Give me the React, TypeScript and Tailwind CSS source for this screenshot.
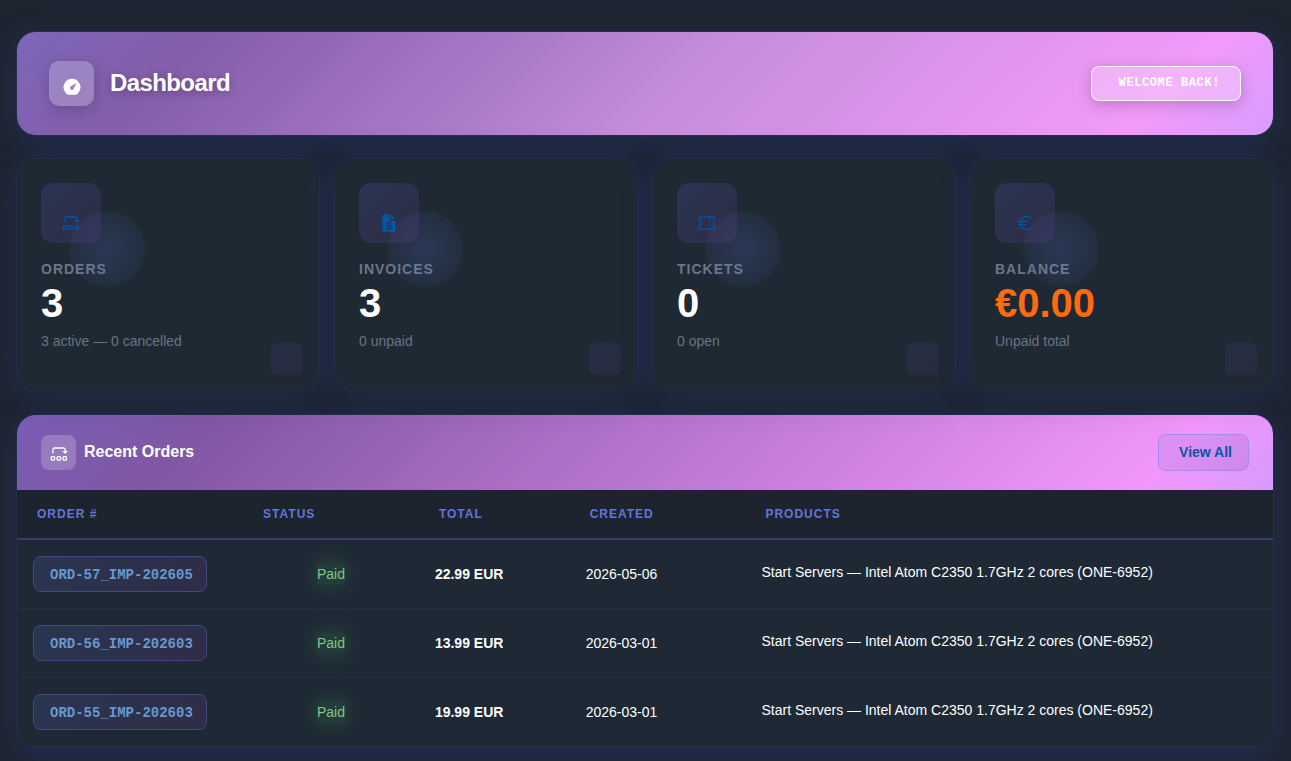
import React from 'react';
import { Euro } from 'lucide-react';

interface Stat {
  label: string;
  value: string;
  note: string;
  icon: React.ReactNode;
  highlight?: boolean;
}

interface Order {
  id: string;
  status: string;
  total: string;
  created: string;
  product: string;
}

const GaugeIcon: React.FC = () => (
  <svg viewBox="0 0 20 20" className="h-5 w-5" fill="currentColor" aria-hidden="true">
    <path
      fillRule="evenodd"
      d="M10 1.8a8.4 8.4 0 0 0-6.6 13.6l1.3 1.7c.3.4.7.6 1.2.6h8.2c.5 0 .9-.2 1.2-.6l1.3-1.7A8.4 8.4 0 0 0 10 1.8zM14.4 6.3l-2.5 4.9a2 2 0 1 1-2.6-2.3z"
    />
  </svg>
);

const OrdersIcon: React.FC = () => (
  <svg viewBox="0 0 20 20" className="h-5 w-5" fill="none" stroke="currentColor" strokeWidth="1.3" aria-hidden="true">
    <path d="M3.9 9.6V5.8a1.8 1.8 0 0 1 1.8-1.8h8.7a1.8 1.8 0 0 1 1.8 1.8V7.200" />
    <path d="M13.4 7l2.8 3 2.600-3z" fill="currentColor" stroke="none" />
    <rect x="2.2" y="12.6" width="3.4" height="3.6" rx="0.9" />
    <rect x="8.1" y="12.6" width="3.4" height="3.6" rx="0.9" />
    <rect x="14" y="12.6" width="3.4" height="3.6" rx="0.9" />
  </svg>
);

const InvoiceIcon: React.FC = () => (
  <svg viewBox="0 0 20 20" className="h-5 w-5" fill="currentColor" aria-hidden="true">
    <path d="M5.2 1.4H11V7a.8.8 0 0 0 .8.8h4.9v9.1a1.8 1.8 0 0 1-1.8 1.8H5.2a1.8 1.8 0 0 1-1.8-1.8V3.2a1.8 1.8 0 0 1 1.8-1.8z" />
    <path d="M12.3 1.6l4 4.3h-4z" />
    <path
      d="M12.4 10.4c-.4-.6-1.2-.8-2.4-.8-1.4 0-2.2.5-2.2 1.5 0 2.2 4.5.9 4.5 3.1 0 1-.9 1.5-2.3 1.5-1.2 0-2-.3-2.5-.9M10 8.6v1M10 15.7v1"
      fill="none"
      stroke="#2c3350"
      strokeWidth="1.5"
    />
  </svg>
);

const TicketIcon: React.FC = () => (
  <svg viewBox="0 0 20 20" className="h-5 w-5" fill="none" stroke="currentColor" strokeWidth="1.3" aria-hidden="true">
    <path d="M3.4 3.8h13.2a1 1 0 0 1 1 1v2.4A3 3 0 0 0 16 10a3 3 0 0 0 1.6 2.8v2.4a1 1 0 0 1-1 1H3.4a1 1 0 0 1-1-1v-2.4A3 3 0 0 0 4 10a3 3 0 0 0-1.6-2.8V4.8a1 1 0 0 1 1-1z" />
    <path d="M12.7 3.2v2.6M12.7 7.2v2.2M12.7 10.8v2.2M12.7 14.4v2.4" />
  </svg>
);

const stats: Stat[] = [
  { label: 'Orders', value: '3', note: '3 active — 0 cancelled', icon: <OrdersIcon /> },
  { label: 'Invoices', value: '3', note: '0 unpaid', icon: <InvoiceIcon /> },
  { label: 'Tickets', value: '0', note: '0 open', icon: <TicketIcon /> },
  {
    label: 'Balance',
    value: '€0.00',
    note: 'Unpaid total',
    icon: <Euro className="h-5 w-5" strokeWidth={1.5} />,
    highlight: true
  }
];

const product = 'Start Servers — Intel Atom C2350 1.7GHz 2 cores (ONE-6952)';

const orders: Order[] = [
  { id: 'ORD-57_IMP-202605', status: 'Paid', total: '22.99 EUR', created: '2026-05-06', product },
  { id: 'ORD-56_IMP-202603', status: 'Paid', total: '13.99 EUR', created: '2026-03-01', product },
  { id: 'ORD-55_IMP-202603', status: 'Paid', total: '19.99 EUR', created: '2026-03-01', product }
];

const StatCard: React.FC<{ stat: Stat }> = ({ stat }) => (
  <div className="relative overflow-hidden rounded-[20px] border border-[#222d42] bg-[#1e2934] px-6 pt-6 pb-10 shadow-[0_4px_32px_rgba(40,60,150,0.32)]">
    <div className="flex h-[60px] w-[60px] items-end justify-center rounded-xl bg-linear-135 from-[#2a3552] to-[#2e2c46] pb-[10px] text-[#0056a8]">
      {stat.icon}
    </div>
    <div className="absolute top-[52px] left-[52px] h-[76px] w-[76px] rounded-full bg-radial from-[#667eea]/18 to-[#667eea]/6 to-70%" />
    <h2 className="mt-4 text-[14px] leading-5 font-bold tracking-[1px] text-[#6b7688] uppercase">{stat.label}</h2>
    <p className={`mt-1 text-[40px] leading-10 font-bold ${stat.highlight ? 'text-[#fd6a10]' : 'text-white'}`}>
      {stat.value}
    </p>
    <p className="mt-2 text-[14px] leading-5 text-[#687482]">{stat.note}</p>
    <div className="absolute right-4 bottom-4 h-8 w-8 rounded-md bg-linear-135 from-[#252f46] to-[#292b3f]" />
  </div>
);

const App: React.FC = () => {
  return (
    <main className="flex min-h-screen flex-col bg-[#1e2530] pt-[31px] pr-[17px] pb-[13px] pl-4 font-['Liberation_Sans',Arial,sans-serif] text-white">
      <header className="flex items-center justify-between rounded-[20px] border border-[#2a2f48] bg-[linear-gradient(135deg,#7d66ba_0%,#845eaa_14%,#a979c6_38%,#c48bd8_52%,#ca8fdd_57%,#f29afa_89%,#d69cff_100%)] bg-origin-border px-8 py-[29px] shadow-[0_8px_32px_rgba(40,60,150,0.35)]">
        <div className="flex items-center gap-4">
          <div className="flex h-[45px] w-[45px] items-end justify-center rounded-[10px] bg-white/22 pb-[9px] shadow-[0_4px_15px_rgba(0,0,0,0.2)]">
            <GaugeIcon />
          </div>
          <h1 className="pb-0.5 text-2xl leading-8 font-bold tracking-tight [text-shadow:0_2px_10px_rgba(0,0,0,0.3)]">
            Dashboard
          </h1>
        </div>
        <span className="rounded-lg border border-white bg-white/25 pt-2 pr-5 pb-[9px] pl-[27px] font-['Liberation_Mono',monospace] text-xs font-bold tracking-wider uppercase shadow-[0_4px_15px_rgba(0,0,0,0.2)]">
          Welcome back!
        </span>
      </header>

      <section className="mt-[22px] grid grid-cols-4 gap-[14px]">
        {stats.map((stat) => (
          <StatCard key={stat.label} stat={stat} />
        ))}
      </section>

      <section className="mt-[22px] overflow-hidden rounded-[20px] border border-[#222d46] bg-[#1e2935] shadow-[0_8px_32px_rgba(40,60,150,0.35)]">
        <div className="flex items-center justify-between bg-[linear-gradient(135deg,#785eb5_0%,#8157a4_15%,#f296fb_90%,#d69aff_100%)] px-6 py-[19px]">
          <div className="flex items-center gap-2">
            <div className="flex h-[35px] w-[35px] items-end justify-center rounded-lg bg-white/20 pb-[6px]">
              <OrdersIcon />
            </div>
            <h2 className="pb-0.5 text-base leading-6 font-bold">Recent Orders</h2>
          </div>
          <a
            href="#orders"
            className="rounded-lg border border-[#a78bea] bg-linear-135 from-[#667eea]/15 to-[#764ba2]/20 py-2 pr-4 pl-5 text-[14px] leading-[19px] font-bold text-[#0a55a8]"
          >
            View All
          </a>
        </div>

        <table className="w-full table-fixed border-collapse text-left text-sm">
          <thead className="bg-[#1e242f]">
            <tr className="h-[49px] border-b-2 border-[#353f70] text-xs tracking-[1px] text-[#6176dc] uppercase">
              <th className="w-[18%] px-5 font-bold">Order #</th>
              <th className="w-[14%] px-5 font-bold">Status</th>
              <th className="w-[12%] px-5 font-bold">Total</th>
              <th className="w-[14%] px-5 font-bold">Created</th>
              <th className="px-5 font-bold">Products</th>
            </tr>
          </thead>
          <tbody>
            {orders.map((order) => (
              <tr key={order.id} className="h-[69px] border-b border-[#233041]">
                <td className="px-4">
                  <a
                    href={`#${order.id}`}
                    className="inline-block rounded-lg border border-[#3f4a80] bg-linear-135 from-[#293651] to-[#302c46] pt-2 pr-[13px] pb-1.5 pl-4 align-middle font-['Liberation_Mono',monospace] font-bold whitespace-nowrap text-[#6699cf]"
                  >
                    {order.id}
                  </a>
                </td>
                <td className="px-4 text-center">
                  <span className="inline-block bg-[#4caf50]/15 text-[#81c784] shadow-[0_0_20px_rgba(76,175,80,0.3)]">
                    {order.status}
                  </span>
                </td>
                <td className="px-4 font-bold">{order.total}</td>
                <td className="px-4">{order.created}</td>
                <td className="px-4 pb-1">{order.product}</td>
              </tr>
            ))}
          </tbody>
        </table>
      </section>
    </main>
  );
};

export default App;
